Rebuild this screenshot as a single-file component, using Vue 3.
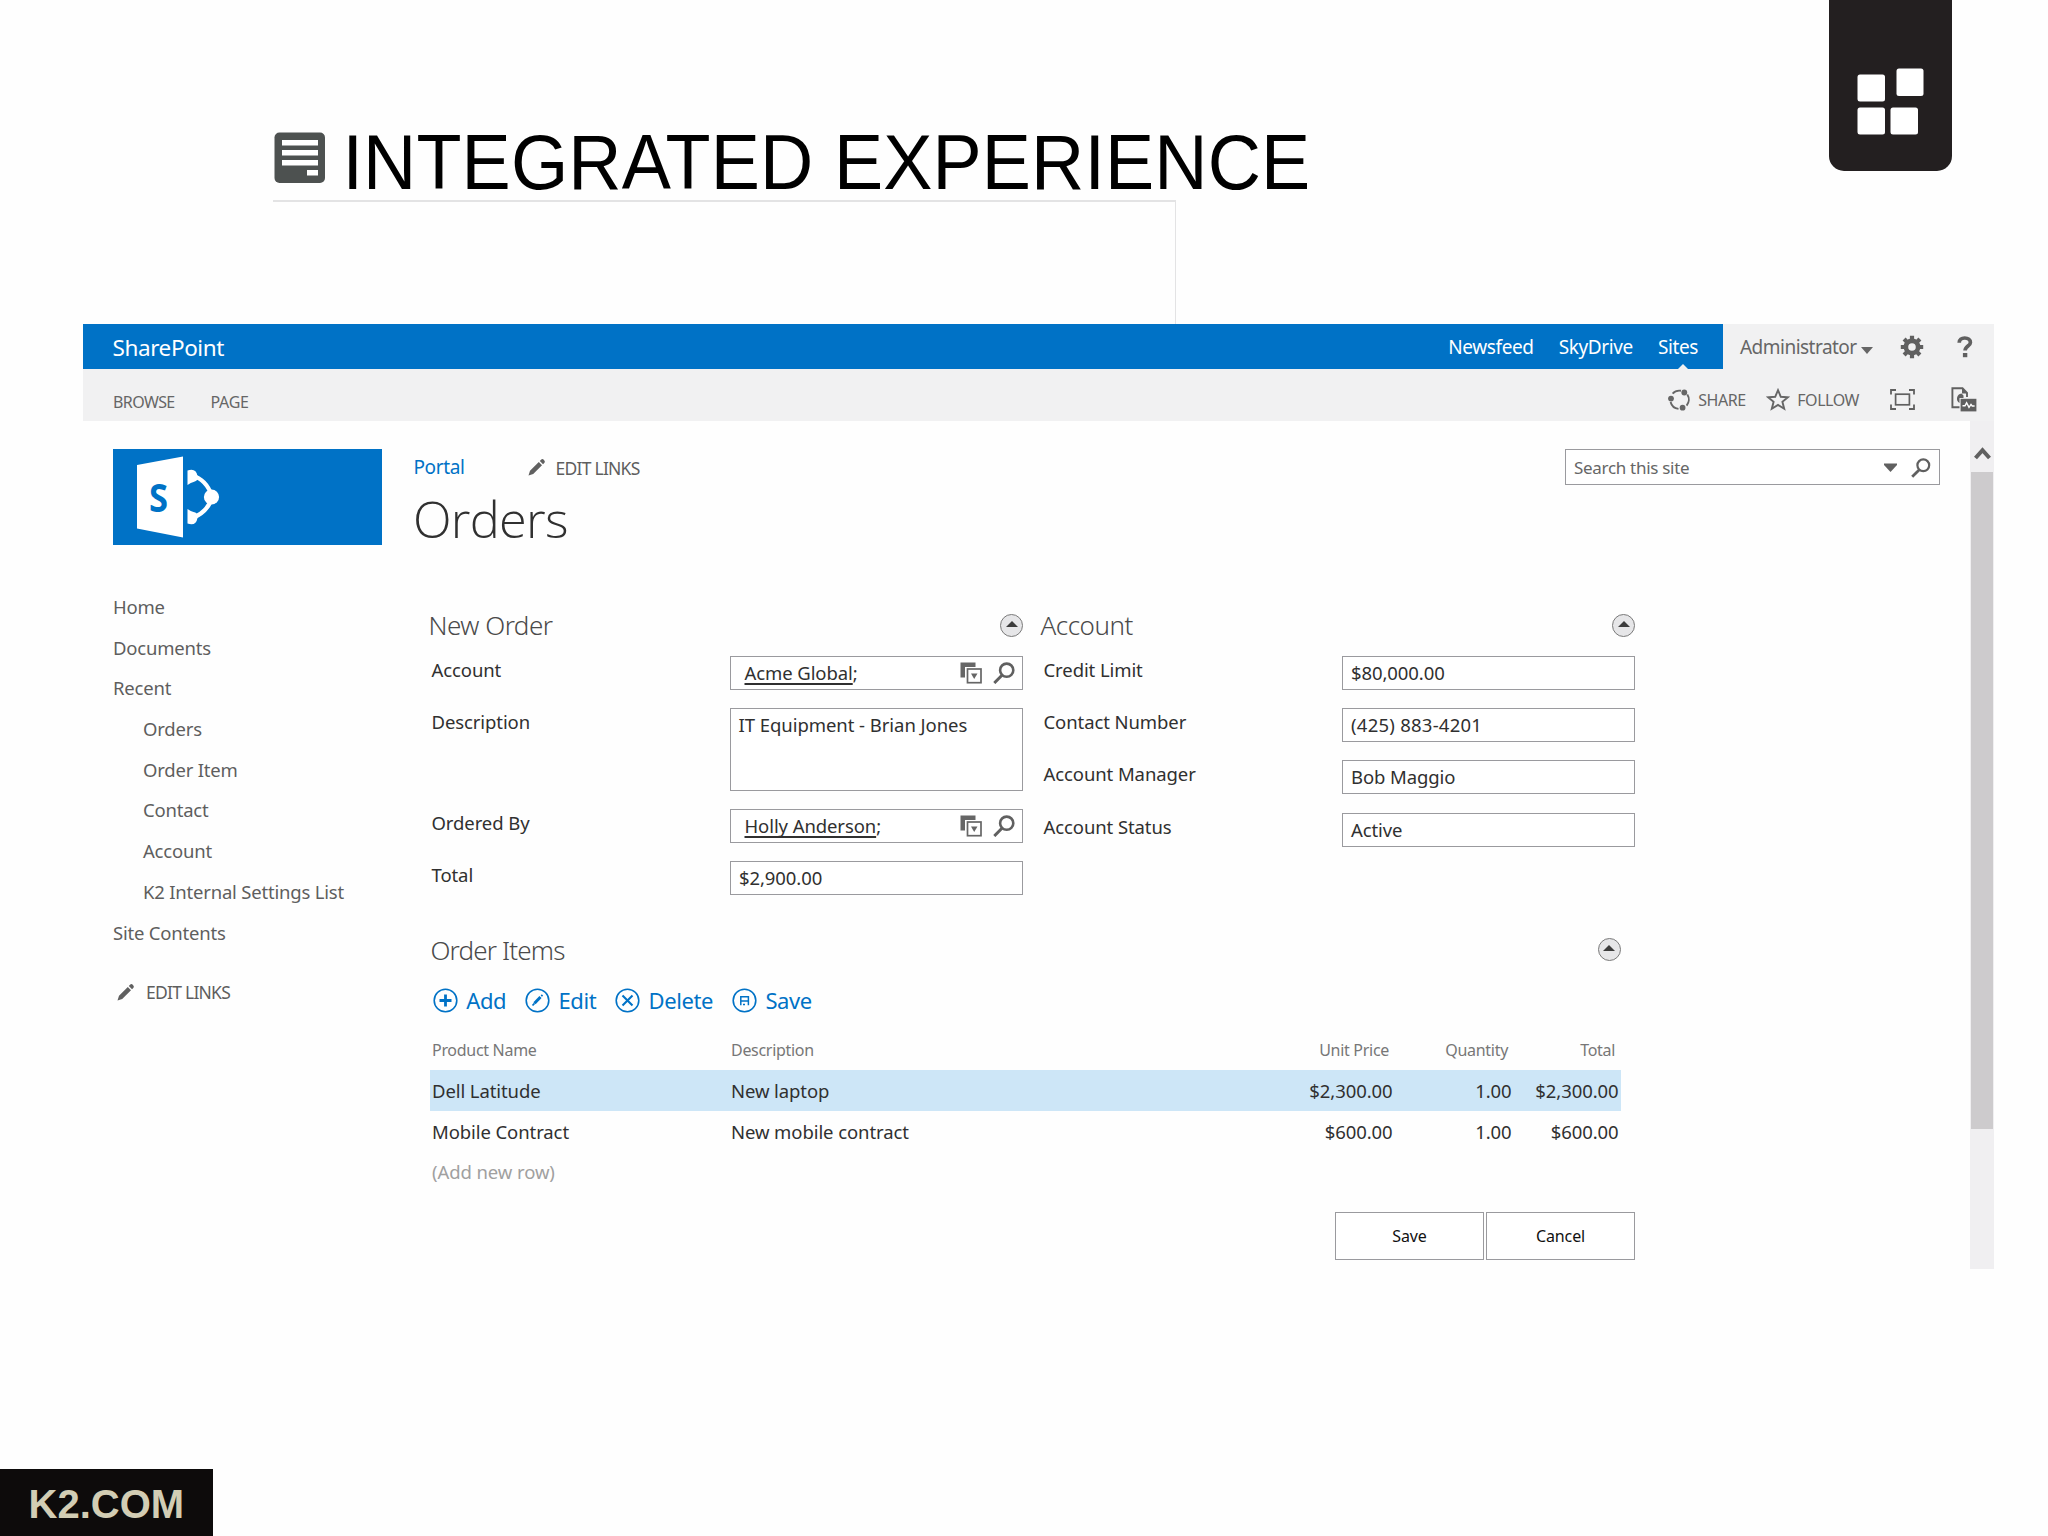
<script setup>
const navLinks = [
  { text: 'Home' },
  { text: 'Documents' },
  { text: 'Recent' },
  { text: 'Orders', sub: true },
  { text: 'Order Item', sub: true },
  { text: 'Contact', sub: true },
  { text: 'Account', sub: true },
  { text: 'K2 Internal Settings List', sub: true },
  { text: 'Site Contents' },
]

const orderFields = [
  { label: 'Account', value: 'Acme Global', type: 'lookup' },
  { label: 'Description', value: 'IT Equipment - Brian Jones', type: 'area' },
  { label: 'Ordered By', value: 'Holly Anderson', type: 'lookup' },
  { label: 'Total', value: '$2,900.00', type: 'text' },
]

const accountFields = [
  { label: 'Credit Limit', value: '$80,000.00' },
  { label: 'Contact Number', value: '(425) 883-4201', type: 'phone' },
  { label: 'Account Manager', value: 'Bob Maggio' },
  { label: 'Account Status', value: 'Active' },
]

const rows = [
  { name: 'Dell Latitude', desc: 'New laptop', price: '$2,300.00', qty: '1.00', total: '$2,300.00', selected: true },
  { name: 'Mobile Contract', desc: 'New mobile contract', price: '$600.00', qty: '1.00', total: '$600.00' },
]
</script>

<template>
  <div class="slide">
    <header class="head">
      <div class="head-left">
        <div class="title-row">
          <svg class="doc-icon" width="53" height="52" viewBox="0 0 53 52">
            <rect x="1.5" y="0.5" width="50.5" height="50.5" rx="5" fill="#4d5150" />
            <g fill="#fff">
              <rect x="9" y="8" width="36" height="5.5" />
              <rect x="9" y="18" width="36" height="5.5" />
              <rect x="9" y="28" width="36" height="5.5" />
              <rect x="34" y="38" width="11" height="5.5" />
            </g>
          </svg>
          <h1>INTEGRATED EXPERIENCE</h1>
        </div>
        <div class="frame"></div>
      </div>
      <div class="badge">
        <svg width="123" height="171" viewBox="0 0 123 171" fill="#fff">
          <rect x="28.5" y="74.5" width="27.5" height="27" rx="2.5" />
          <rect x="67.5" y="68.5" width="27" height="27.5" rx="2.5" />
          <rect x="28.5" y="107.5" width="27.5" height="27" rx="2.5" />
          <rect x="61.5" y="107.5" width="27.5" height="27" rx="2.5" />
        </svg>
      </div>
    </header>

    <div class="window">
      <div class="suite">
        <div class="suite-blue">
          <span class="brand">SharePoint</span>
          <span class="suite-link">Newsfeed</span>
          <span class="suite-link">SkyDrive</span>
          <span class="suite-link current">Sites</span>
        </div>
        <span class="admin">Administrator</span>
        <svg class="admin-caret" width="12" height="7" viewBox="0 0 12 7"><path d="M0 0H12L6 7Z" fill="#666" /></svg>
        <svg class="gear" width="24" height="24" viewBox="0 0 24 24">
          <g fill="none" stroke="#606060">
            <circle cx="12" cy="12" r="6.1" stroke-width="4.6" />
            <path d="M12 .8V5M12 19V23.2M.8 12H5M19 12H23.2M4.1 4.1L7 7M17 17L19.9 19.9M4.1 19.9L7 17M17 7L19.9 4.1" stroke-width="4.2" />
          </g>
        </svg>
        <svg class="help" width="16" height="22" viewBox="0 0 16 22">
          <path d="M2.2 6.8C2.2 3.6 4.6 2 7.7 2C11.1 2 13.4 3.7 13.4 6.4C13.4 10 8.1 10.2 8.1 14.6" fill="none" stroke="#606060" stroke-width="3.7" />
          <rect x="5.9" y="17" width="4.4" height="4.2" fill="#606060" />
        </svg>
      </div>

      <div class="ribbon">
        <span class="tab browse">BROWSE</span>
        <span class="tab">PAGE</span>
        <svg class="share" width="23" height="22" viewBox="0 0 23 22">
          <g fill="none" stroke="#666" stroke-width="1.9">
            <path d="M4.6 4.6A9.2 9.2 0 0 1 13 1.8" />
            <path d="M19.3 5.600A9.2 9.2 0 0 1 18.6 16.6" />
            <path d="M2.6 13A9.2 9.2 0 0 0 10.5 19.9" />
          </g>
          <g fill="#666">
            <circle cx="16.3" cy="3.500" r="2.900" />
            <circle cx="3" cy="9.600" r="2.900" />
            <circle cx="14.6" cy="18.700" r="2.900" />
          </g>
        </svg>
        <span class="act">SHARE</span>
        <svg class="star" width="24" height="23" viewBox="0 0 24 23">
          <path d="M12 2.2L14.8 8.8L21.9 9.3L16.4 13.8L18.2 20.7L12 16.9L5.8 20.7L7.6 13.8L2.1 9.3L9.2 8.8Z" fill="none" stroke="#666" stroke-width="1.9" />
        </svg>
        <span class="act">FOLLOW</span>
        <svg class="focus" width="25" height="21" viewBox="0 0 25 21" fill="none" stroke="#606060">
          <path d="M1 5.5V1H6M19 1H24V5.5M24 15.5V20H19M6 20H1V15.5" stroke-width="1.8" />
          <rect x="5.6" y="5.2" width="13.8" height="10.6" stroke-width="1.7" />
        </svg>
        <svg class="report" width="26" height="25" viewBox="0 0 26 25">
          <path d="M16 10V6L11.500 1.2H1.4V20.3H8.5" fill="none" stroke="#606060" stroke-width="1.9" />
          <path d="M11 1V6.500H16.500Z" fill="#606060" />
          <path d="M10.500 6.400A5.200 5.200 0 0 0 8.500 16V11H12.500V8.500Z" fill="#606060" />
          <rect x="9.6" y="11.8" width="15.8" height="12.6" fill="#606060" />
          <path d="M11.5 18.8H14L15.6 15.8L18 20.4L20 17.4L21.2 19H23.6" fill="none" stroke="#fff" stroke-width="1.4" />
        </svg>
      </div>

      <div class="body">
        <aside class="side">
          <div class="logo">
            <svg width="269" height="96" viewBox="0 0 269 96">
              <path d="M24 16L70 7.5V88.5L24 79.5Z" fill="#fff" />
              <text x="36" y="62.5" class="logo-s" textLength="19" lengthAdjust="spacingAndGlyphs" fill="#0072c6">S</text>
              <path d="M80 27C88 29 95 36 99 47C97 58 89 65 80 69" fill="none" stroke="#fff" stroke-width="4.2" />
              <path d="M74.500 21.500Q83 18.500 84.500 27Q85.500 32 80.500 33Q78 33.500 74.500 36ZM74.500 60Q78 62.500 80.500 63Q85.500 64 84.500 69Q83 77.500 74.500 74.500Z" fill="#fff" />
              <circle cx="98.500" cy="48" r="7.600" fill="#fff" />
            </svg>
          </div>
          <nav>
            <div v-for="l in navLinks" :key="l.text" class="nav-item" :class="{ sub: l.sub }">{{ l.text }}</div>
          </nav>
          <div class="edit-links side-edit">
            <svg width="18" height="18" viewBox="0 0 18 18" fill="#606060">
              <path d="M.5 17.500L2 12.800L10.800 4L14 7.200L5.200 16ZM11.800 3L13.300 1.500Q14.500 .5 16 2Q17.500 3.500 16.500 4.700L15 6.200Z" />
            </svg>
            <span>EDIT LINKS</span>
          </div>
        </aside>

        <main class="content">
          <div class="crumbs">
            <span class="portal">Portal</span>
            <div class="edit-links">
              <svg width="18" height="18" viewBox="0 0 18 18" fill="#606060">
                <path d="M.5 17.500L2 12.800L10.800 4L14 7.200L5.200 16ZM11.800 3L13.300 1.500Q14.500 .5 16 2Q17.500 3.500 16.500 4.700L15 6.200Z" />
              </svg>
              <span class="crumb-edit">EDIT LINKS</span>
            </div>
            <div class="search">
              <span>Search this site</span>
              <svg width="13" height="9" viewBox="0 0 13 9"><path d="M0 .5H13V2L6.500 9L0 2Z" fill="#606060" /></svg>
              <svg class="mag" width="20" height="20" viewBox="0 0 20 20" fill="none" stroke="#606060">
                <circle cx="12.300" cy="7.300" r="5.900" stroke-width="2.200" />
                <path d="M8.300 11.700L1.200 18.700" stroke-width="2.800" />
              </svg>
            </div>
          </div>
          <h2>Orders</h2>

          <div class="form">
            <section class="panel">
              <div class="panel-head">
                <h3>New Order</h3>
                <i class="collapse"></i>
              </div>
              <div v-for="f in orderFields" :key="f.label" class="field">
                <label>{{ f.label }}</label>
                <div class="box" :class="f.type">
                  <template v-if="f.type === 'lookup'">
                    <span class="val"><u>{{ f.value }}</u>;</span>
                    <svg width="22" height="22" viewBox="0 0 22 22">
                      <path d="M.5 .5H15.500V5H5V15.500H.5Z" fill="#666" />
                      <rect x="7.500" y="7" width="13.500" height="13.700" fill="#fff" stroke="#666" stroke-width="1.700" />
                      <path d="M11 11.500H17.500L14.200 17Z" fill="#666" />
                    </svg>
                    <svg class="mag-lg" width="22" height="22" viewBox="0 0 22 22" fill="none" stroke="#606060">
                      <circle cx="13.700" cy="8.200" r="6.600" stroke-width="2.600" />
                      <path d="M9.200 13L1.300 21" stroke-width="3" />
                    </svg>
                  </template>
                  <span v-else class="val">{{ f.value }}</span>
                </div>
              </div>
            </section>

            <section class="panel">
              <div class="panel-head">
                <h3>Account</h3>
                <i class="collapse"></i>
              </div>
              <div v-for="f in accountFields" :key="f.label" class="field">
                <label>{{ f.label }}</label>
                <div class="box" :class="f.type"><span class="val">{{ f.value }}</span></div>
              </div>
            </section>
          </div>

          <section class="items">
            <div class="panel-head">
              <h3>Order Items</h3>
              <i class="collapse"></i>
            </div>
            <div class="tools">
              <span class="tool">
                <svg width="25" height="25" viewBox="0 0 25 25" fill="none" stroke="#0072c6"><circle cx="12.500" cy="12.500" r="11.300" stroke-width="1.600" /><path d="M12.500 6.500V18.500M6.500 12.500H18.500" stroke-width="2.800" /></svg>
                Add
              </span>
              <span class="tool">
                <svg width="25" height="25" viewBox="0 0 25 25" fill="none" stroke="#0072c6"><circle cx="12.500" cy="12.500" r="11.300" stroke-width="1.600" /><path d="M9.500 15.300L15.500 9" stroke-width="3" /><path d="M7.500 17.500L9.500 15.400M16.300 8.200L17.500 7" stroke-width="1.800" /></svg>
                Edit
              </span>
              <span class="tool">
                <svg width="25" height="25" viewBox="0 0 25 25" fill="none" stroke="#0072c6"><circle cx="12.500" cy="12.500" r="11.300" stroke-width="1.600" /><path d="M7.500 7.500L17.500 17.500M17.500 7.500L7.500 17.500" stroke-width="2.100" /></svg>
                Delete
              </span>
              <span class="tool">
                <svg width="25" height="25" viewBox="0 0 25 25" fill="none" stroke="#0072c6"><circle cx="12.500" cy="12.500" r="11.300" stroke-width="1.600" /><path d="M8.800 17.300V8.700H16.400V17.300M8.800 13H16.400M11 16.600H13" stroke-width="1.500" /></svg>
                Save
              </span>
            </div>
            <div class="row header">
              <span>Product Name</span><span>Description</span><span class="num">Unit Price</span><span class="num">Quantity</span><span class="num">Total</span>
            </div>
            <div v-for="r in rows" :key="r.name" class="row" :class="{ selected: r.selected }">
              <span>{{ r.name }}</span><span>{{ r.desc }}</span><span class="num">{{ r.price }}</span><span class="num">{{ r.qty }}</span><span class="num">{{ r.total }}</span>
            </div>
            <div class="row new"><span>(Add new row)</span></div>
          </section>

          <div class="buttons">
            <div class="btn">Save</div>
            <div class="btn">Cancel</div>
          </div>
        </main>

        <div class="scroll">
          <svg width="17" height="13" viewBox="0 0 17 13"><path d="M1.500 11L8.500 3.200L15.500 11" fill="none" stroke="#606060" stroke-width="4" /></svg>
          <div class="thumb"></div>
        </div>
      </div>
    </div>

    <footer>K2.COM</footer>
  </div>
</template>

<style>
body { background: #fefefe; }
</style>

<style scoped>
.slide {
  width: 2048px;
  height: 1536px;
  display: flex;
  flex-direction: column;
  overflow: hidden;
  background: #fefefe;
  font-family: "Noto Sans", "Open Sans", sans-serif;
  font-size: 18.5px;
  letter-spacing: -0.09px;
  color: #303030;
  white-space: nowrap;
}
svg { display: block; flex: none; }
h1, h2, h3 { margin: 0; font-weight: 400; }

.head { display: flex; height: 324px; flex: none; }
.head-left { margin-left: 273px; width: 1200px; }
.title-row { display: flex; height: 200px; }
.doc-icon { margin-top: 132px; }
h1 {
  margin-left: 16.5px;
  margin-top: 124px;
  height: 60px;
  font-family: "Liberation Sans", Arial, sans-serif;
  font-size: 73.7px;
  line-height: 80px;
  letter-spacing: 0.14px;
  color: #000;
  transform: scaleY(1.05);
  transform-origin: 0 65.5px;
}
.frame {
  width: 903px;
  height: 124px;
  box-sizing: border-box;
  border-top: 2px solid #e3e3e4;
  border-right: 1px solid #e3e3e4;
}
.badge {
  margin-left: auto;
  margin-right: 96px;
  width: 123px;
  height: 171px;
  background: #231f20;
  border-radius: 0 0 15px 15px;
}

.window { margin-left: 83px; width: 1911px; height: 945px; flex: none; background: #f1f1f2; }
.suite { display: flex; align-items: center; height: 45px; }
.suite-blue {
  display: flex;
  align-items: center;
  gap: 25px;
  width: 1640px;
  height: 45px;
  box-sizing: border-box;
  padding: 0 25px 0 29.5px;
  background: #0072c6;
  color: #fff;
  font-size: 19px;
  letter-spacing: -0.38px;
}
.brand { margin-right: auto; font-size: 22.5px; letter-spacing: -0.4px; padding-top: 1px; }
.current { position: relative; }
.current::after {
  content: "";
  position: absolute;
  left: 19px;
  bottom: -10px;
  border: 6px solid transparent;
  border-top: 0;
  border-bottom-color: #f1f1f2;
}
.admin { margin-left: 17px; width: 118px; font-size: 19px; letter-spacing: -0.52px; color: #666; }
.admin-caret { margin: 8px 0 0 2.5px; }
.gear { margin-left: 27px; }
.help { margin-left: 33.5px; }

.ribbon { display: flex; align-items: center; height: 52px; box-sizing: border-box; padding-top: 9px; font-size: 16px; letter-spacing: -0.45px; color: #666; }
.tab { width: 60px; margin-top: 4px; letter-spacing: -0.3px; }
.browse { margin-left: 30px; width: 97.5px; letter-spacing: -0.6px; }
.share { margin-left: auto; }
.act { margin-left: 7px; }
.act:nth-of-type(3) { width: 50px; }
.star { margin-left: 18px; }
.focus { margin-left: 31px; }
.report { margin-left: 36px; margin-right: 17px; }

.body { display: flex; height: 848px; background: #fefefe; }
.side { width: 329px; box-sizing: border-box; padding: 28px 0 0 30px; color: #5e5e5e; }
.logo { width: 269px; height: 96px; background: #0072c6; }
.logo-s { font: 700 40px "Open Sans", "Noto Sans", sans-serif; letter-spacing: 0; }
nav { margin-top: 42px; letter-spacing: -0.2px; }
.nav-item { height: 40.7px; line-height: 40.7px; }
.nav-item.sub { padding-left: 30px; }
.edit-links { display: flex; align-items: center; gap: 11px; font-size: 17.5px; letter-spacing: -0.75px; color: #5e5e5e; }
.side-edit { height: 30px; margin: 23.5px 0 0 4px; }
.crumb-edit { padding-top: 1px; margin-left: -1px; }

.content { width: 1558px; }
.crumbs { display: flex; align-items: center; margin-top: 28px; height: 36px; }
.portal { width: 114px; margin-left: 1.500px; font-size: 19px; letter-spacing: -0.38px; color: #0072c6; }
.search {
  display: flex;
  align-items: center;
  margin-left: auto;
  margin-right: 30px;
  width: 375px;
  height: 36px;
  box-sizing: border-box;
  padding: 1px 8px 0 8px;
  border: 1.5px solid #9a9a9e;
  background: #fff;
  font-size: 17px;
  letter-spacing: -0.3px;
  color: #666;
}
.search span { margin-right: auto; }
.mag { margin-left: 14px; }
h2 { margin: 4px 0 0 1px; height: 60px; line-height: 59px; font-family: "Open Sans", "Noto Sans", sans-serif; font-weight: 300; font-size: 50.5px; letter-spacing: -0.75px; }

.form { display: flex; gap: 18.5px; margin: 56px 0 0 17.5px; height: 289px; }
.panel { width: 593.5px; }
.panel-head { display: flex; align-items: center; justify-content: space-between; height: 40px; margin-bottom: 11px; }
h3 { font-size: 26px; font-weight: 300; letter-spacing: -0.5px; color: #4a4a4a; margin-left: -1px; }
.collapse {
  width: 23px;
  height: 23px;
  box-sizing: border-box;
  border: 1.5px solid #7a7a7a;
  border-radius: 50%;
  background: #e6e6e8;
  display: flex;
  align-items: center;
  justify-content: center;
}
.collapse::before { content: ""; border: 6px solid transparent; border-top: 0; border-bottom: 6.5px solid #3c3c3c; margin-top: -2px; }
.field { display: flex; margin-bottom: 18.2px; }
.field label { width: 298.5px; padding-left: 2px; line-height: 27px; }
.box {
  display: flex;
  align-items: center;
  width: 293px;
  height: 34px;
  box-sizing: border-box;
  padding: 0 7px 0 8px;
  border: 1.5px solid #9a9a9e;
  background: #fff;
}
.box .val { margin-top: -1px; }
.box.phone { letter-spacing: 0.25px; }
.box.area { height: 82.5px; align-items: flex-start; }
.box.area .val { margin-top: 0; line-height: 31px; letter-spacing: -0.05px; margin-left: -0.5px; }
.box.lookup .val { margin-left: 5.5px; margin-right: auto; }
.box u { text-underline-offset: 2.5px; text-decoration-thickness: 1.5px; text-decoration-skip-ink: none; }
.mag-lg { margin-left: 11px; }

.items { margin: 36px 0 0 17.5px; width: 1191px; }
.items .panel-head { margin-bottom: 12px; }
.items .collapse { margin-top: -2px; }
.items h3 { margin-left: 1px; letter-spacing: -0.85px; }
.tools { display: flex; align-items: center; gap: 19px; height: 36px; padding-left: 3.5px; font-size: 22px; letter-spacing: -0.4px; color: #0072c6; }
.tool { display: flex; align-items: center; gap: 8.300px; }
.row { display: grid; grid-template-columns: 299px 405px 261px 119px 107px; align-items: center; height: 40.5px; box-sizing: border-box; padding-top: 1px; }
.row span { padding: 0 2px 0 2.5px; }
.row .num { text-align: right; }
.row.header { margin-top: 12px; height: 40px; padding: 0 0 1px; font-size: 16px; letter-spacing: -0.3px; color: #777; }
.row.header .num { padding-right: 5.5px; }
.row.selected { background: #cde6f7; }
.row.new { color: #a0a0a0; }
.buttons { display: flex; gap: 2px; justify-content: flex-end; width: 1223px; margin-top: 20px; }
.btn {
  width: 149px;
  height: 48px;
  box-sizing: border-box;
  padding-top: 1px;
  border: 1.5px solid #9a9a9e;
  background: #fff;
  font-size: 16px;
  line-height: 45px;
  text-align: center;
  letter-spacing: -0.1px;
  color: #111;
}

.scroll { width: 24px; height: 848px; background: #f0eff1; }
.scroll svg { margin: 26px 0 0 4px; }
.thumb { margin: 12px 1px 0; height: 657px; background: #cdcbcd; }

footer {
  margin-top: auto;
  width: 212.5px;
  height: 67px;
  box-sizing: border-box;
  padding: 4px 0 0 28.5px;
  background: #0d0b0b;
  color: #d2cdb4;
  font: 700 40px "Liberation Sans", Arial, sans-serif;
  line-height: 62px;
  letter-spacing: 0;
}
</style>
